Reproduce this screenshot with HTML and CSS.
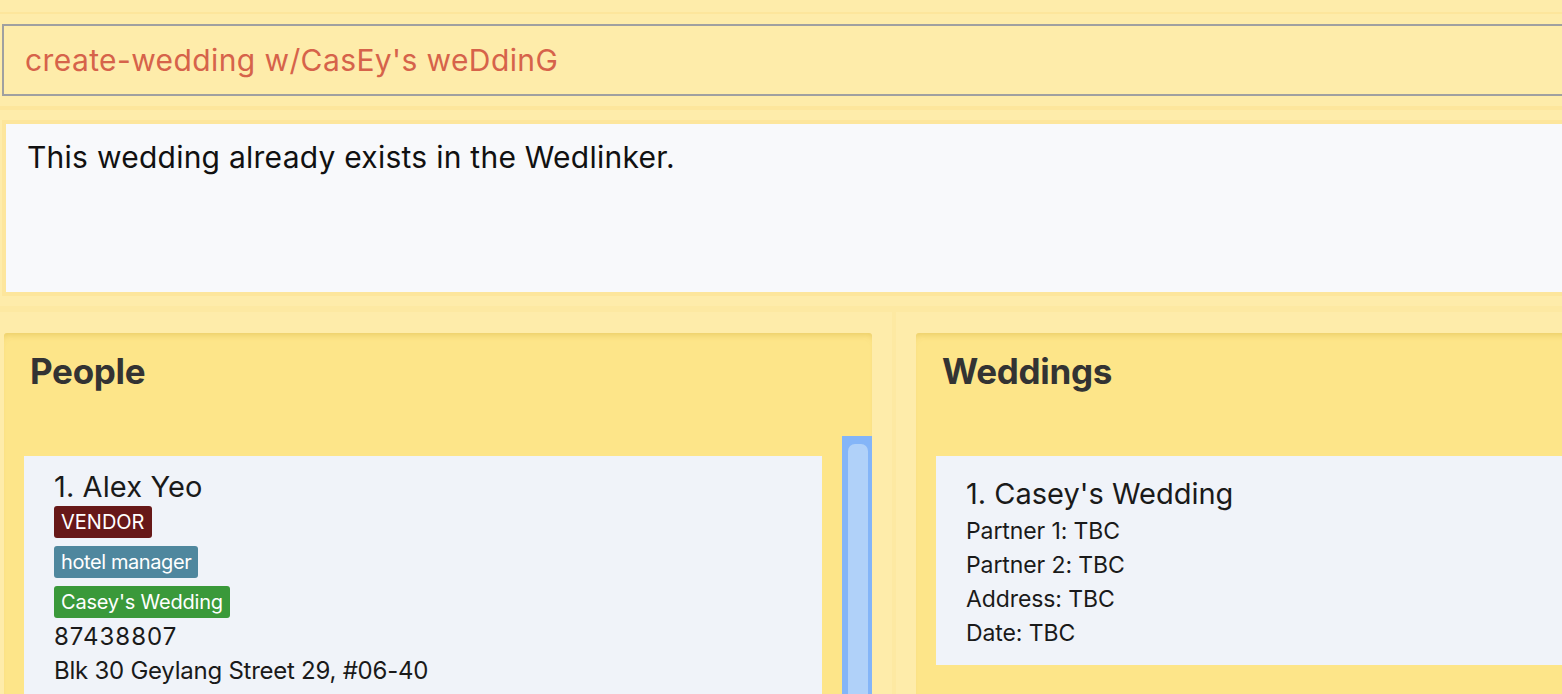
FILE: index.html
```html
<!DOCTYPE html>
<html>
<head>
<meta charset="utf-8">
<link rel="stylesheet" href="styles.css">
</head>
<body>
<div class="app">
  <div class="top-gap"></div>
  <div class="cmd-wrap">
    <div class="cmd-box">create-wedding w/CasEy's weDdinG</div>
  </div>
  <div class="band"></div>
  <div class="res-wrap">
    <div class="res-box">This wedding already exists in the Wedlinker.</div>
  </div>
  <div class="hsep"></div>
  <div class="lists">
    <div class="col col-left">
      <div class="panel">
        <div class="panel-head">People</div>
        <div class="panel-body people-body">
          <div class="card person">
            <div class="name">1. Alex Yeo</div>
            <div class="tag tag-vendor">VENDOR</div>
            <div class="tag tag-job">hotel manager</div>
            <div class="tag tag-wed">Casey's Wedding</div>
            <div class="line phone">87438807</div>
            <div class="line">Blk 30 Geylang Street 29, #06-40</div>
            <div class="line">alexyeo@example.com</div>
          </div>
          <div class="scrollbar"><div class="thumb"></div></div>
        </div>
      </div>
    </div>
    <div class="vsep"></div>
    <div class="col col-right">
      <div class="panel">
        <div class="panel-head">Weddings</div>
        <div class="panel-body">
          <div class="card wedding">
            <div class="wname">1. Casey's Wedding</div>
            <div class="wline">Partner 1: TBC</div>
            <div class="wline">Partner 2: TBC</div>
            <div class="wline">Address: TBC</div>
            <div class="wline">Date: TBC</div>
          </div>
        </div>
      </div>
    </div>
  </div>
</div>
</body>
</html>
```

FILE: styles.css
```css
html, body {
  margin: 0;
  padding: 0;
  width: 1562px;
  height: 694px;
  overflow: hidden;
  background: #feecaa;
  font-family: "Inter", "Noto Sans", sans-serif;
}
.app {
  width: 1620px;
  display: flex;
  flex-direction: column;
}
.top-gap {
  height: 12px;
  border-bottom: 2px solid #fde69c;
}
.cmd-wrap {
  padding: 10px 0 0 2px;
}
.cmd-box {
  height: 68px;
  border: 2px solid #a0a0a0;
  background: #feecaa;
  color: #d6634a;
  font-size: 30px;
  line-height: 68px;
  padding-left: 21px;
  letter-spacing: 0.4px;
}
.band {
  margin-top: 10px;
  height: 4px;
  background: #fde69c;
}
.res-wrap {
  padding: 10px 0 0 2px;
}
.res-box {
  border: 4px solid #fde69c;
  background: #f8f9fb;
  color: #111;
  font-size: 30px;
  padding: 15px 0 0 21px;
  box-sizing: border-box;
  height: 176px;
  letter-spacing: 0.25px;
}
.hsep {
  margin-top: 10px;
  height: 6px;
  background: #fde9a2;
}
.lists {
  display: flex;
  padding-top: 21px;
  height: 400px;
}
.col-left {
  width: 868px;
  padding-left: 4px;
  padding-right: 20px;
}
.vsep {
  width: 4px;
  margin-top: -21px;
  background: #fde9a2;
}
.col-right {
  flex: 1;
  padding-left: 20px;
}
.panel {
  height: 100%;
  background: #fde589;
  border-radius: 3px 3px 0 0;
  box-shadow: inset 0 6px 6px -4px rgba(200, 160, 40, 0.35);
}
.panel-head {
  height: 100px;
  box-sizing: border-box;
  padding: 17px 0 0 26px;
  font-size: 35px;
  font-weight: 700;
  color: #333;
  letter-spacing: -0.3px;
}
.panel-body {
  position: relative;
  padding: 23px 0 0 20px;
}
.people-body {
  padding-right: 50px;
}
.card {
  background: #f0f3f9;
  color: #1a1a1a;
}
.person {
  width: 798px;
  height: 260px;
  box-sizing: border-box;
  padding: 13px 0 0 30px;
}
.name {
  font-size: 29px;
  line-height: 36px;
  letter-spacing: 0.1px;
  margin-bottom: 1px;
}
.tag {
  display: table;
  color: #fff;
  font-size: 20px;
  line-height: 32px;
  padding: 0 7px;
  border-radius: 3px;
  margin-bottom: 8px;
  letter-spacing: -0.2px;
}
.tag-vendor { background: #671818; letter-spacing: 0; }
.tag-job { background: #4f879e; letter-spacing: -0.4px; }
.tag-wed { background: #3a993a; margin-bottom: 2px; }
.line {
  font-size: 24px;
  line-height: 34px;
  letter-spacing: -0.25px;
}
.phone {
  letter-spacing: 1px;
}
.scrollbar {
  position: absolute;
  top: 3px;
  right: 0;
  width: 30px;
  height: 400px;
  background: #84b5f8;
}
.thumb {
  margin: 8px 0 0 6px;
  width: 20px;
  height: 390px;
  background: #b0d1f9;
  border-radius: 7px;
}
.wedding {
  height: 209px;
  box-sizing: border-box;
  padding: 19px 0 0 30px;
}
.wname {
  font-size: 29px;
  line-height: 38px;
  letter-spacing: 0;
  margin-bottom: 1px;
}
.wline {
  font-size: 23px;
  line-height: 34px;
  letter-spacing: -0.1px;
}
```
